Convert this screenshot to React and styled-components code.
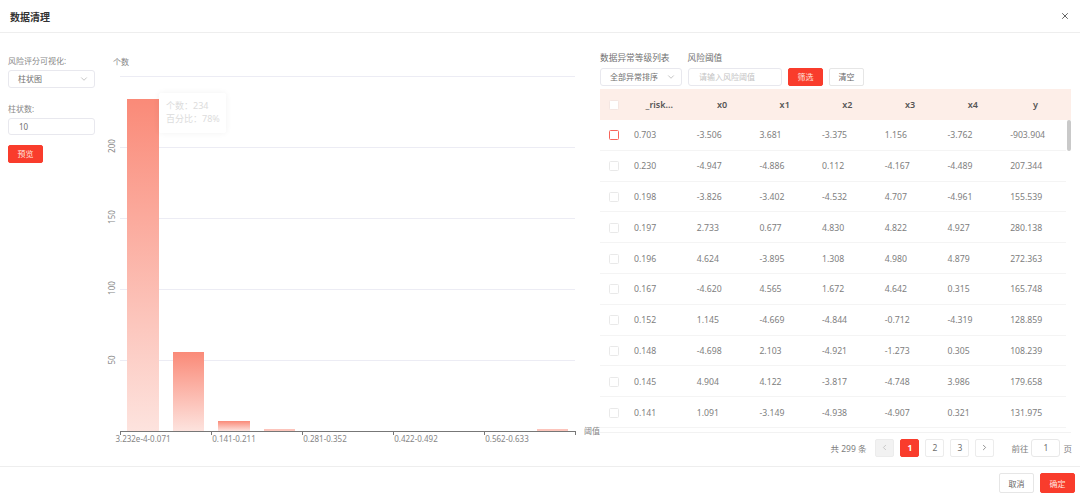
import React from 'react';
import styled, { createGlobalStyle } from 'styled-components';
import { X, ChevronDown, ChevronLeft, ChevronRight } from 'lucide-react';

const rows = [
  ['0.703', '-3.506', '3.681', '-3.375', '1.156', '-3.762', '-903.904'],
  ['0.230', '-4.947', '-4.886', '0.112', '-4.167', '-4.489', '207.344'],
  ['0.198', '-3.826', '-3.402', '-4.532', '4.707', '-4.961', '155.539'],
  ['0.197', '2.733', '0.677', '4.830', '4.822', '4.927', '280.138'],
  ['0.196', '4.624', '-3.895', '1.308', '4.980', '4.879', '272.363'],
  ['0.167', '-4.620', '4.565', '1.672', '4.642', '0.315', '165.748'],
  ['0.152', '1.145', '-4.669', '-4.844', '-0.712', '-4.319', '128.859'],
  ['0.148', '-4.698', '2.103', '-4.921', '-1.273', '0.305', '108.239'],
  ['0.145', '4.904', '4.122', '-3.817', '-4.748', '3.986', '179.658'],
  ['0.141', '1.091', '-3.149', '-4.938', '-4.907', '0.321', '131.975'],
];
const columns = ['_risk...', 'x0', 'x1', 'x2', 'x3', 'x4', 'y'];

const bars = [
  { x: 127, top: 99, w: 32 },
  { x: 173, top: 352, w: 31 },
  { x: 218, top: 421, w: 32 },
  { x: 264, top: 429.5, w: 31 },
  { x: 537, top: 429.5, w: 31 },
];
const gridLines = [76, 147, 218, 289, 360];
const yLabels = [
  { y: 146, text: '200' },
  { y: 217, text: '150' },
  { y: 288, text: '100' },
  { y: 360, text: '50' },
];
const xLabels = [
  { x: 143, text: '3.232e-4-0.071' },
  { x: 234, text: '0.141-0.211' },
  { x: 325, text: '0.281-0.352' },
  { x: 416, text: '0.422-0.492' },
  { x: 507, text: '0.562-0.633' },
];
const ticks = [120.5, 211.5, 302.5, 393.5, 484.5, 575.5];

const GlobalStyle = createGlobalStyle`
  html, body {
    margin: 0;
    padding: 0;
    background: #fff;
  }
  body {
    font-family: "Noto Sans", "Noto Sans CJK SC", sans-serif;
    color: #666;
  }
`;

export default function App() {
  return (
    <Dialog>
      <GlobalStyle />
      <Header>
        <Title>数据清理</Title>
        <X size={10} color="#444" strokeWidth={2} />
      </Header>
      <Body>
        <Sidebar>
          <FieldLabel>风险评分可视化:</FieldLabel>
          <SelectBox $width={87}>
            柱状图
            <ChevronDown size={10} color="#bbb" />
          </SelectBox>
          <FieldLabel $gap={15}>柱状数:</FieldLabel>
          <InputBox $width={87}>10</InputBox>
          <PreviewButton $primary>预览</PreviewButton>
        </Sidebar>
        <ChartArea>
          <Chart />
          <Tooltip>
            <div>个数：234</div>
            <div>百分比：78%</div>
          </Tooltip>
        </ChartArea>
        <ListPanel>
          <LabelRow>
            <span>数据异常等级列表</span>
            <span>风险阈值</span>
          </LabelRow>
          <Toolbar>
            <SelectBox $width={82}>
              全部异常排序
              <ChevronDown size={10} color="#bbb" />
            </SelectBox>
            <ThresholdInput>请输入风险阈值</ThresholdInput>
            <Button $primary>筛选</Button>
            <Button>清空</Button>
          </Toolbar>
          <Table>
            <HeadRow>
              <CheckCell>
                <Check $head />
              </CheckCell>
              {columns.map((c) => (
                <HeadCell key={c}>{c}</HeadCell>
              ))}
            </HeadRow>
            <RowsClip>
              {rows.map((row, i) => (
                <Row key={row[0]}>
                  <CheckCell>
                    <Check $active={i === 0} />
                  </CheckCell>
                  {row.map((v, j) => (
                    <Cell key={j}>{v}</Cell>
                  ))}
                </Row>
              ))}
              <ScrollThumb />
            </RowsClip>
          </Table>
          <Pagination>
            <Total>共 299 条</Total>
            <PageButton $disabled>
              <ChevronLeft size={9} />
            </PageButton>
            <PageButton $current>1</PageButton>
            <PageButton>2</PageButton>
            <PageButton>3</PageButton>
            <PageButton>
              <ChevronRight size={9} />
            </PageButton>
            <Jump>
              前往
              <JumpInput>1</JumpInput>
              页
            </Jump>
          </Pagination>
        </ListPanel>
      </Body>
      <Footer>
        <Button>取消</Button>
        <Button $primary>确定</Button>
      </Footer>
    </Dialog>
  );
}

function Chart() {
  return (
    <svg width="500" height="400" viewBox="100 50 500 400">
      <defs>
        {bars.map((b, i) => (
          <linearGradient key={i} id={`bar${i}`} x1="0" y1="0" x2="0" y2="1">
            <stop offset="0" stopColor="#fa8a78" />
            <stop offset="1" stopColor="#fde3de" />
          </linearGradient>
        ))}
      </defs>
      {gridLines.map((y) => (
        <line key={y} x1="120" x2="575" y1={y + 0.5} y2={y + 0.5} stroke="#ececf4" />
      ))}
      {bars.map((b, i) => (
        <rect key={i} x={b.x} y={b.top} width={b.w} height={431 - b.top} fill={`url(#bar${i})`} />
      ))}
      <line x1="120" x2="575" y1="431.5" y2="431.5" stroke="#777" />
      {ticks.map((x) => (
        <line key={x} x1={x} x2={x} y1="431" y2="435" stroke="#777" />
      ))}
      {yLabels.map((l) => (
        <AxisText
          key={l.text}
          x="111"
          y={l.y}
          textAnchor="middle"
          dominantBaseline="central"
          transform={`rotate(-90 111 ${l.y})`}
        >
          {l.text}
        </AxisText>
      ))}
      {xLabels.map((l) => (
        <AxisText key={l.text} x={l.x} y="442" textAnchor="middle">
          {l.text}
        </AxisText>
      ))}
      <AxisText x="113" y="65">个数</AxisText>
      <AxisText x="584" y="434">阈值</AxisText>
    </svg>
  );
}

const Dialog = styled.div`
  width: 1080px;
  height: 498px;
  display: flex;
  flex-direction: column;
  overflow: hidden;
  background: #fff;
`;

const Header = styled.header`
  height: 32px;
  flex: none;
  display: flex;
  align-items: center;
  justify-content: space-between;
  padding: 0 10px;
  border-bottom: 1px solid #eeeeee;
`;

const Title = styled.h1`
  margin: 0;
  font-size: 10px;
  font-weight: 700;
  color: #333;
`;

const Body = styled.main`
  height: 433px;
  flex: none;
  display: flex;
`;

const Sidebar = styled.aside`
  width: 100px;
  flex: none;
  padding: 22px 0 0 8px;
  box-sizing: border-box;
`;

const FieldLabel = styled.div`
  font-size: 8px;
  line-height: 11px;
  margin-top: ${(p) => p.$gap || 0}px;
  margin-bottom: 4px;
  color: #888;
`;

const SelectBox = styled.div`
  width: ${(p) => p.$width}px;
  height: 17.5px;
  box-sizing: border-box;
  padding: 0 5px 0 9px;
  display: flex;
  align-items: center;
  justify-content: space-between;
  flex: none;
  border: 1px solid #e8e8ee;
  border-radius: 3px;
  font-size: 8px;
  color: #707070;
`;

const InputBox = styled(SelectBox)`
  padding-left: 10px;
`;

const Button = styled.button`
  width: 35px;
  height: 17.5px;
  padding: 0;
  flex: none;
  font-family: inherit;
  font-size: 8px;
  border-radius: 2px;
  border: 1px solid ${(p) => (p.$primary ? '#f93c2c' : '#e6e6e6')};
  background: ${(p) => (p.$primary ? '#f93c2c' : '#fff')};
  color: ${(p) => (p.$primary ? '#ffe4df' : '#666')};
`;

const PreviewButton = styled(Button)`
  display: block;
  margin-top: 10px;
`;

const ChartArea = styled.section`
  width: 500px;
  flex: none;
  position: relative;
  padding-top: 17px;
  svg {
    display: block;
  }
`;

const AxisText = styled.text`
  font-size: 8px;
  fill: #858585;
`;

const Tooltip = styled.div`
  position: absolute;
  left: 59px;
  top: 60px;
  width: 67px;
  height: 40px;
  box-sizing: border-box;
  padding: 6px 7px;
  background: rgba(255, 255, 255, 0.9);
  box-shadow: 0 0 6px rgba(0, 0, 0, 0.06);
  border-radius: 3px;
  font-size: 9px;
  line-height: 13px;
  white-space: nowrap;
  color: #dcdcdc;
`;

const ListPanel = styled.section`
  width: 472px;
  flex: none;
  padding-top: 19px;
  box-sizing: border-box;
`;

const LabelRow = styled.div`
  display: flex;
  gap: 18px;
  font-size: 8.7px;
  line-height: 12px;
  color: #707070;
`;

const Toolbar = styled.div`
  display: flex;
  gap: 6px;
  margin-top: 4px;
`;

const ThresholdInput = styled.div`
  width: 94px;
  height: 17.5px;
  box-sizing: border-box;
  padding-left: 10px;
  display: flex;
  align-items: center;
  border: 1px solid #e8e8ee;
  border-radius: 3px;
  font-size: 8px;
  color: #c4c4c4;
`;

const Table = styled.div`
  margin-top: 3.5px;
  width: 471px;
`;

const gridColumns = '28px repeat(7, 62.7px) 4px';

const HeadRow = styled.div`
  height: 31px;
  display: grid;
  grid-template-columns: ${gridColumns};
  align-items: center;
  background: #fdeee8;
`;

const HeadCell = styled.div`
  font-size: 9px;
  font-weight: 600;
  text-align: center;
  color: #555;
`;

const RowsClip = styled.div`
  height: 312px;
  overflow: hidden;
  position: relative;
  border-bottom: 1px solid #f2f2f2;
`;

const Row = styled.div`
  height: 30.8px;
  box-sizing: border-box;
  display: grid;
  grid-template-columns: ${gridColumns};
  align-items: center;
  width: 466px;
  padding-top: 1px;
  border-bottom: 1px solid #f4f4f4;
`;

const CheckCell = styled.div`
  display: flex;
  justify-content: center;
  padding-right: 1px;
`;

const Check = styled.span`
  width: 8px;
  height: 8px;
  border-radius: 1.5px;
  background: #fff;
  border: 1px solid ${(p) => (p.$active ? '#f8645a' : p.$head ? '#f4e6e2' : '#e9e9e9')};
`;

const Cell = styled.div`
  font-size: 8.7px;
  padding-left: 6px;
  color: #808080;
  white-space: nowrap;
`;

const ScrollThumb = styled.div`
  position: absolute;
  right: 0;
  top: 0;
  width: 4px;
  height: 31px;
  background: #c9c9c9;
  border-radius: 2px;
`;

const Pagination = styled.nav`
  height: 29px;
  display: flex;
  align-items: center;
  justify-content: flex-end;
  gap: 6px;
`;

const Total = styled.span`
  font-size: 8.5px;
  margin-right: 3px;
  color: #808080;
`;

const PageButton = styled.div`
  width: 19px;
  height: 18px;
  box-sizing: border-box;
  display: flex;
  align-items: center;
  justify-content: center;
  border: 1px solid ${(p) => (p.$current ? '#f93c2c' : '#ececec')};
  border-radius: 2px;
  font-size: 8.5px;
  font-weight: ${(p) => (p.$current ? 700 : 400)};
  background: ${(p) => (p.$current ? '#f93c2c' : p.$disabled ? '#f2f2f2' : '#fff')};
  color: ${(p) => (p.$current ? '#fff' : p.$disabled ? '#bbb' : '#707070')};
`;

const Jump = styled.div`
  display: flex;
  align-items: center;
  gap: 3px;
  margin-left: 11px;
  font-size: 8.5px;
  color: #808080;
`;

const JumpInput = styled.div`
  width: 29px;
  height: 18px;
  box-sizing: border-box;
  display: flex;
  align-items: center;
  justify-content: center;
  border: 1px solid #e8e8e8;
  border-radius: 3px;
  color: #707070;
`;

const Footer = styled.footer`
  flex: 1;
  display: flex;
  justify-content: flex-end;
  align-items: flex-start;
  gap: 6px;
  padding: 6px 5px 0 0;
  border-top: 1px solid #eeeeee;

  button {
    height: 20px;
  }
`;
